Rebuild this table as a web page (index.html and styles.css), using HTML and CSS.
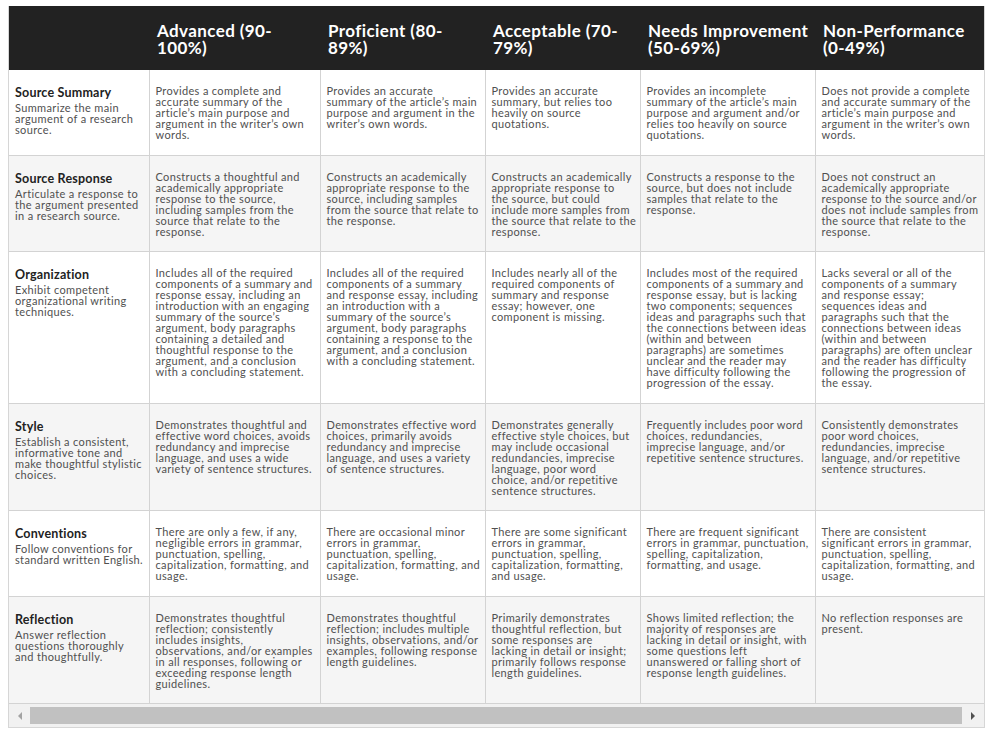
FILE: index.html
```html
<!DOCTYPE html>
<html lang="en">
<head>
<meta charset="utf-8">
<title>Rubric</title>
<link rel="stylesheet" href="styles.css">
</head>
<body>
<div class="rubric">
  <table class="grid">
    <colgroup>
      <col class="c-crit"><col class="c-adv"><col class="c-pro"><col class="c-acc"><col class="c-ni"><col class="c-np">
    </colgroup>
    <thead>
      <tr>
        <th></th>
        <th>Advanced (90-<br>100%)</th>
        <th>Proficient (80-<br>89%)</th>
        <th>Acceptable (70-<br>79%)</th>
        <th>Needs Improvement<br>(50-69%)</th>
        <th>Non-Performance<br>(0-49%)</th>
      </tr>
    </thead>
    <tbody>
      <tr>
        <td><span class="crit-title">Source Summary</span><span class="crit-desc">Summarize the main<br>argument of a research<br>source.</span></td>
        <td>Provides a complete and<br>accurate summary of the<br>article’s main purpose and<br>argument in the writer’s own<br>words.</td>
        <td>Provides an accurate<br>summary of the article’s main<br>purpose and argument in the<br>writer’s own words.</td>
        <td>Provides an accurate<br>summary, but relies too<br>heavily on source<br>quotations.</td>
        <td>Provides an incomplete<br>summary of the article’s main<br>purpose and argument and/or<br>relies too heavily on source<br>quotations.</td>
        <td>Does not provide a complete<br>and accurate summary of the<br>article’s main purpose and<br>argument in the writer’s own<br>words.</td>
      </tr>
      <tr>
        <td><span class="crit-title">Source Response</span><span class="crit-desc">Articulate a response to<br>the argument presented<br>in a research source.</span></td>
        <td>Constructs a thoughtful and<br>academically appropriate<br>response to the source,<br>including samples from the<br>source that relate to the<br>response.</td>
        <td>Constructs an academically<br>appropriate response to the<br>source, including samples<br>from the source that relate to<br>the response.</td>
        <td>Constructs an academically<br>appropriate response to<br>the source, but could<br>include more samples from<br>the source that relate to the<br>response.</td>
        <td>Constructs a response to the<br>source, but does not include<br>samples that relate to the<br>response.</td>
        <td>Does not construct an<br>academically appropriate<br>response to the source and/or<br>does not include samples from<br>the source that relate to the<br>response.</td>
      </tr>
      <tr>
        <td><span class="crit-title">Organization</span><span class="crit-desc">Exhibit competent<br>organizational writing<br>techniques.</span></td>
        <td>Includes all of the required<br>components of a summary and<br>response essay, including an<br>introduction with an engaging<br>summary of the source’s<br>argument, body paragraphs<br>containing a detailed and<br>thoughtful response to the<br>argument, and a conclusion<br>with a concluding statement.</td>
        <td>Includes all of the required<br>components of a summary<br>and response essay, including<br>an introduction with a<br>summary of the source’s<br>argument, body paragraphs<br>containing a response to the<br>argument, and a conclusion<br>with a concluding statement.</td>
        <td>Includes nearly all of the<br>required components of<br>summary and response<br>essay; however, one<br>component is missing.</td>
        <td>Includes most of the required<br>components of a summary and<br>response essay, but is lacking<br>two components; sequences<br>ideas and paragraphs such that<br>the connections between ideas<br>(within and between<br>paragraphs) are sometimes<br>unclear and the reader may<br>have difficulty following the<br>progression of the essay.</td>
        <td>Lacks several or all of the<br>components of a summary<br>and response essay;<br>sequences ideas and<br>paragraphs such that the<br>connections between ideas<br>(within and between<br>paragraphs) are often unclear<br>and the reader has difficulty<br>following the progression of<br>the essay.</td>
      </tr>
      <tr>
        <td><span class="crit-title">Style</span><span class="crit-desc">Establish a consistent,<br>informative tone and<br>make thoughtful stylistic<br>choices.</span></td>
        <td>Demonstrates thoughtful and<br>effective word choices, avoids<br>redundancy and imprecise<br>language, and uses a wide<br>variety of sentence structures.</td>
        <td>Demonstrates effective word<br>choices, primarily avoids<br>redundancy and imprecise<br>language, and uses a variety<br>of sentence structures.</td>
        <td>Demonstrates generally<br>effective style choices, but<br>may include occasional<br>redundancies, imprecise<br>language, poor word<br>choice, and/or repetitive<br>sentence structures.</td>
        <td>Frequently includes poor word<br>choices, redundancies,<br>imprecise language, and/or<br>repetitive sentence structures.</td>
        <td>Consistently demonstrates<br>poor word choices,<br>redundancies, imprecise<br>language, and/or repetitive<br>sentence structures.</td>
      </tr>
      <tr>
        <td><span class="crit-title">Conventions</span><span class="crit-desc">Follow conventions for<br>standard written English.</span></td>
        <td>There are only a few, if any,<br>negligible errors in grammar,<br>punctuation, spelling,<br>capitalization, formatting, and<br>usage.</td>
        <td>There are occasional minor<br>errors in grammar,<br>punctuation, spelling,<br>capitalization, formatting, and<br>usage.</td>
        <td>There are some significant<br>errors in grammar,<br>punctuation, spelling,<br>capitalization, formatting,<br>and usage.</td>
        <td>There are frequent significant<br>errors in grammar, punctuation,<br>spelling, capitalization,<br>formatting, and usage.</td>
        <td>There are consistent<br>significant errors in grammar,<br>punctuation, spelling,<br>capitalization, formatting, and<br>usage.</td>
      </tr>
      <tr>
        <td><span class="crit-title">Reflection</span><span class="crit-desc">Answer reflection<br>questions thoroughly<br>and thoughtfully.</span></td>
        <td>Demonstrates thoughtful<br>reflection; consistently<br>includes insights,<br>observations, and/or examples<br>in all responses, following or<br>exceeding response length<br>guidelines.</td>
        <td>Demonstrates thoughtful<br>reflection; includes multiple<br>insights, observations, and/or<br>examples, following response<br>length guidelines.</td>
        <td>Primarily demonstrates<br>thoughtful reflection, but<br>some responses are<br>lacking in detail or insight;<br>primarily follows response<br>length guidelines.</td>
        <td>Shows limited reflection; the<br>majority of responses are<br>lacking in detail or insight, with<br>some questions left<br>unanswered or falling short of<br>response length guidelines.</td>
        <td>No reflection responses are<br>present.</td>
      </tr>
    </tbody>
  </table>
  <div class="hscroll">
    <div class="hscroll-btn hscroll-left"><span class="tri tri-left"></span></div>
    <div class="hscroll-track"><div class="hscroll-thumb"></div></div>
    <div class="hscroll-btn hscroll-right"><span class="tri tri-right"></span></div>
  </div>
</div>
</body>
</html>
```

FILE: styles.css
```css
html, body {
  margin: 0;
  padding: 0;
  background: #ffffff;
}

body {
  font-family: Lato, "Liberation Sans", Arial, sans-serif;
  color: #4a4a4a;
}

.rubric {
  margin: 6px 0 0 8px;
  width: 975px;
  border: 1px solid #d6d6d6;
  border-top: 0;
}

.grid {
  border-collapse: collapse;
  table-layout: fixed;
  width: 975px;
}

.c-crit { width: 140px; }
.c-adv { width: 171px; }
.c-pro { width: 165px; }
.c-acc { width: 155px; }
.c-ni { width: 175px; }
.c-np { width: 169px; }

.grid th {
  background: #222222;
  color: #ffffff;
  font-weight: 700;
  font-size: 17px;
  line-height: 17px;
  letter-spacing: 0.4px;
  text-align: left;
  vertical-align: top;
  padding: 16px 8px 14px;
  white-space: nowrap;
}

.grid td {
  border: 1px solid #d3d3d3;
  padding: 15px 6px 14.5px;
  font-size: 11px;
  line-height: 11px;
  letter-spacing: 0.35px;
  color: #505050;
  vertical-align: top;
  white-space: nowrap;
  background: #ffffff;
}

.grid td:first-child { border-left: 0; }
.grid td:last-child { border-right: 0; }
.grid tbody tr:first-child td { border-top: 0; }
.grid tbody tr:last-child td { border-bottom: 1px solid #d3d3d3; }

.grid tbody tr:nth-child(even) td {
  background: #f5f5f5;
}

.crit-title {
  display: block;
  font-size: 12.5px;
  line-height: 15px;
  font-weight: 700;
  letter-spacing: 0.2px;
  color: #222222;
}

.crit-desc {
  display: block;
  margin-top: 2px;
}

.hscroll {
  display: flex;
  align-items: center;
  height: 23px;
  background: #f1f1f1;
}

.hscroll-btn {
  flex: 0 0 21px;
  height: 23px;
  display: flex;
  align-items: center;
  justify-content: center;
}

.hscroll-right {
  flex-basis: 22px;
}

.hscroll-track {
  flex: 1;
  height: 17px;
}

.hscroll-thumb {
  height: 17px;
  background: #c1c1c1;
}

.tri {
  width: 0;
  height: 0;
  border-top: 4px solid transparent;
  border-bottom: 4px solid transparent;
}

.tri-left {
  border-right: 4px solid #a3a3a3;
}

.tri-right {
  border-left: 4px solid #505050;
}
```
